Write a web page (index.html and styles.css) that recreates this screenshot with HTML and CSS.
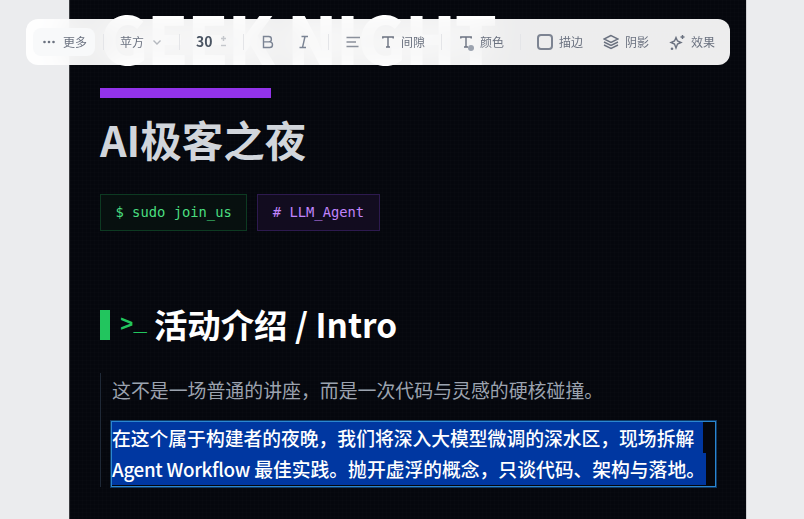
FILE: index.html
```html
<!DOCTYPE html>
<html lang="zh">
<head>
<meta charset="utf-8">
<title>AI极客之夜</title>
<link rel="stylesheet" href="styles.css">
</head>
<body>
<main class="slide">
  <h1 class="title">GEEK NIGHT</h1>
  <div class="accent"></div>
  <h2 class="subtitle">AI极客之夜</h2>
  <div class="tags">
    <span class="tag tag-green">$ sudo join_us</span>
    <span class="tag tag-purple"># LLM_Agent</span>
  </div>
  <h3 class="section"><span class="section-bar"></span><span class="prompt">&gt;_</span><span class="section-text">活动介绍 / Intro</span></h3>
  <div class="intro">
    <p class="lead">这不是一场普通的讲座，而是一次代码与灵感的硬核碰撞。</p>
    <div class="selected">
      <span class="line line-1">在这个属于构建者的夜晚，我们将深入大模型微调的深水区，现场拆解</span>
      <span class="line line-2"><span class="latin">Agent Workflow</span> 最佳实践。抛开虚浮的概念，只谈代码、架构与落地。</span>
    </div>
  </div>
</main>
<nav class="toolbar">
  <button class="tool more">
    <svg class="ico" width="14" height="14" viewBox="0 0 14 14"><circle cx="2.500" cy="7" r="1.300"/><circle cx="7" cy="7" r="1.300"/><circle cx="11.500" cy="7" r="1.300"/></svg>
    <span class="label">更多</span>
  </button>
  <i class="sep sep-a"></i>
  <button class="tool font">
    <span class="label">苹方</span>
    <svg class="stroke chev" width="10" height="10" viewBox="0 0 10 10"><path d="M1.500 3.500 5 7l3.500-3.500"/></svg>
  </button>
  <i class="sep sep-b"></i>
  <div class="size">
    <b class="label">30</b>
    <span class="stepper">
      <svg class="stroke light" width="7" height="7" viewBox="0 0 7 7"><path d="M3.500 1v5M1 3.500h5"/></svg>
      <svg class="stroke light" width="7" height="7" viewBox="0 0 7 7"><path d="M1 3.500h5"/></svg>
    </span>
  </div>
  <i class="sep sep-c"></i>
  <svg class="stroke bold-i" width="14" height="14" viewBox="0 0 14 14"><path d="M2.500 1.500h5.200a2.700 2.700 0 0 1 0 5.400H2.500zM2.500 6.900h6.200a2.800 2.800 0 0 1 0 5.600H2.500z"/></svg>
  <svg class="stroke italic-i" width="12" height="14" viewBox="0 0 12 14"><path d="M3.500 1.500h6.500M1.500 12.500h6.500M7 1.500 4.500 12.500"/></svg>
  <i class="sep sep-d"></i>
  <svg class="stroke align-i" width="14" height="12" viewBox="0 0 14 12"><path d="M.5 1.500h13.500M.5 6h9.500M.5 10.500h12"/></svg>
  <button class="tool spacing">
    <svg class="stroke" width="12" height="12" viewBox="0 0 12 12"><path d="M.8 2.500V1h10.400v1.500M6 1v10M4 11h4"/></svg>
    <span class="label">间隙</span>
  </button>
  <i class="sep sep-e"></i>
  <button class="tool color">
    <span class="color-ico">
      <svg class="stroke" width="12" height="12" viewBox="0 0 12 12"><path d="M.8 2.500V1h10.400v1.500M6 1v10M4 11h4"/></svg>
      <i class="dot"></i>
    </span>
    <span class="label">颜色</span>
  </button>
  <i class="sep sep-f"></i>
  <button class="tool outline">
    <span class="square"></span>
    <span class="label">描边</span>
  </button>
  <button class="tool shadow">
    <svg class="stroke" width="16" height="16" viewBox="0 0 16 16"><path d="M8 1.500 1 5l7 3.500L15 5zM1 8l7 3.500L15 8M1 11l7 3.500 7-3.500"/></svg>
    <span class="label">阴影</span>
  </button>
  <button class="tool effect">
    <svg class="stroke" width="17" height="17" viewBox="0 0 17 17"><path d="M7 3.500 8.500 7 12 8.500 8.500 10 7 14 5.500 10 2 8.500 5.500 7zM13.500 1v4M11.500 3h4M3 13.500v2.500M1.800 14.700h2.400"/></svg>
    <span class="label">效果</span>
  </button>
</nav>
</body>
</html>
```
FILE: styles.css
```css
* { box-sizing: border-box; }
html, body { margin: 0; height: 100%; }
body {
  position: relative;
  width: 804px;
  height: 519px;
  overflow: hidden;
  background: #ebecee;
  font-family: "Noto Sans CJK SC", "Noto Sans", sans-serif;
}
.slide {
  width: 678px;
  height: 519px;
  margin-left: 69px;
  padding-left: 30px;
  overflow: hidden;
  background-color: #05070d;
  background-image:
    linear-gradient(rgba(255,255,255,.006) 1px, transparent 1px),
    linear-gradient(90deg, rgba(255,255,255,.006) 1px, transparent 1px);
  background-size: 4px 4px;
  border-left: 1px solid #3a3c40;
  border-right: 1px solid #cfd0d3;
}
.title {
  margin: -11px 0 0;
  height: 99px;
  font-size: 66px;
  line-height: 94px;
  font-weight: 900;
  color: #fff;
  white-space: nowrap;
  letter-spacing: -1.3px;
}
.accent { width: 171px; height: 10px; background: #9333ea; }
.subtitle {
  margin: 14px 0 0;
  font-size: 41.5px;
  line-height: 54px;
  font-weight: 700;
  color: #d1d5db;
}
.tags { display: flex; gap: 10px; margin-top: 28px; }
.tag {
  height: 37px;
  padding: 0 14.5px;
  border: 1px solid;
  font: 13.8px/35px "DejaVu Sans Mono", monospace;
}
.tag-green { color: #4ade80; background: #07100f; border-color: #0d3a22; }
.tag-purple { color: #c084fc; background: #120c1f; border-color: #2d1a4f; }
.section {
  display: flex;
  align-items: center;
  height: 44px;
  margin: 72px 0 0;
  font-size: 33.4px;
  font-weight: 700;
  color: #fff;
  white-space: nowrap;
}
.section-text { margin-top: -4px; }
.section-bar { width: 10px; height: 30px; background: #22c55e; margin-right: 10px; }
.prompt { font: 700 22.4px "Liberation Mono", monospace; color: #22c55e; margin-right: 7px; }
.intro {
  margin-top: 28px;
  width: 617px;
  padding-left: 11px;
  border-left: 1px solid #1f2937;
}
.lead { margin: -2px 0 14px; font-size: 18.9px; line-height: 34px; color: #9ca3af; }
.selected {
  width: 605px;
  height: 66px;
  margin-left: -1px;
  background: #05070d;
  border: 1px solid #2a86d0;
  box-shadow: 0 0 0 1px #0f3a66;
  font-size: 18.8px;
  font-weight: 500;
  color: #fff;
  white-space: nowrap;
}
.line { display: block; background: #0037a1; }
.line-1 { width: 591px; height: 31px; line-height: 31px; }
.line-2 { width: 594px; height: 32px; line-height: 32px; }
.latin { letter-spacing: -.3px; }
.toolbar {
  position: absolute;
  left: 26px;
  top: 19px;
  width: 704px;
  height: 46px;
  display: flex;
  align-items: center;
  border-radius: 12px;
  background: rgba(255,255,255,.93);
  backdrop-filter: blur(16px);
  font-size: 12px;
  color: #6b7280;
}
.tool {
  display: flex;
  align-items: center;
  padding: 0;
  border: 0;
  background: none;
  font: inherit;
  color: inherit;
}
.label { margin-top: -2px; }
.ico { fill: #6b7280; }
.stroke { fill: none; stroke: #6b7280; stroke-width: 1.4; flex: none; }
.stroke.light { stroke: #c4c7cc; }
.chev { stroke: #b4b8be; margin-left: 8px; }
.sep { display: block; flex: none; width: 1px; height: 16px; background: #e4e5e8; }
.more {
  width: 62px;
  height: 28px;
  margin-left: 7px;
  padding-left: 9px;
  gap: 7px;
  border-radius: 8px;
  background: #f8f9fa;
}
.sep-a { margin-left: 8px; }
.font { margin-left: 16px; }
.sep-b { margin-left: 17px; }
.size { display: flex; align-items: center; margin-left: 16px; font-size: 14px; color: #4b5563; }
.size b { width: 16px; }
.stepper { display: flex; flex-direction: column; margin-left: 8px; }
.sep-c { margin-left: 16px; }
.bold-i { margin-left: 17px; stroke: #7b8494; }
.italic-i { margin-left: 23px; stroke: #7b8494; }
.sep-d { margin-left: 18px; }
.align-i { margin-left: 17px; stroke: #8a909b; }
.spacing { margin-left: 22px; gap: 7px; }
.sep-e { margin-left: 16px; }
.color { margin-left: 18px; gap: 8px; }
.color-ico { position: relative; display: flex; }
.dot {
  position: absolute;
  right: -2px;
  bottom: -3px;
  width: 6px;
  height: 6px;
  border-radius: 50%;
  background: #9ca3af;
}
.sep-f { margin-left: 16px; }
.outline { margin-left: 16px; gap: 6px; }
.square { width: 16px; height: 16px; border: 2px solid #7d8492; border-radius: 4px; }
.shadow { margin-left: 20px; gap: 6px; }
.effect { margin-left: 20px; gap: 5px; }
```
